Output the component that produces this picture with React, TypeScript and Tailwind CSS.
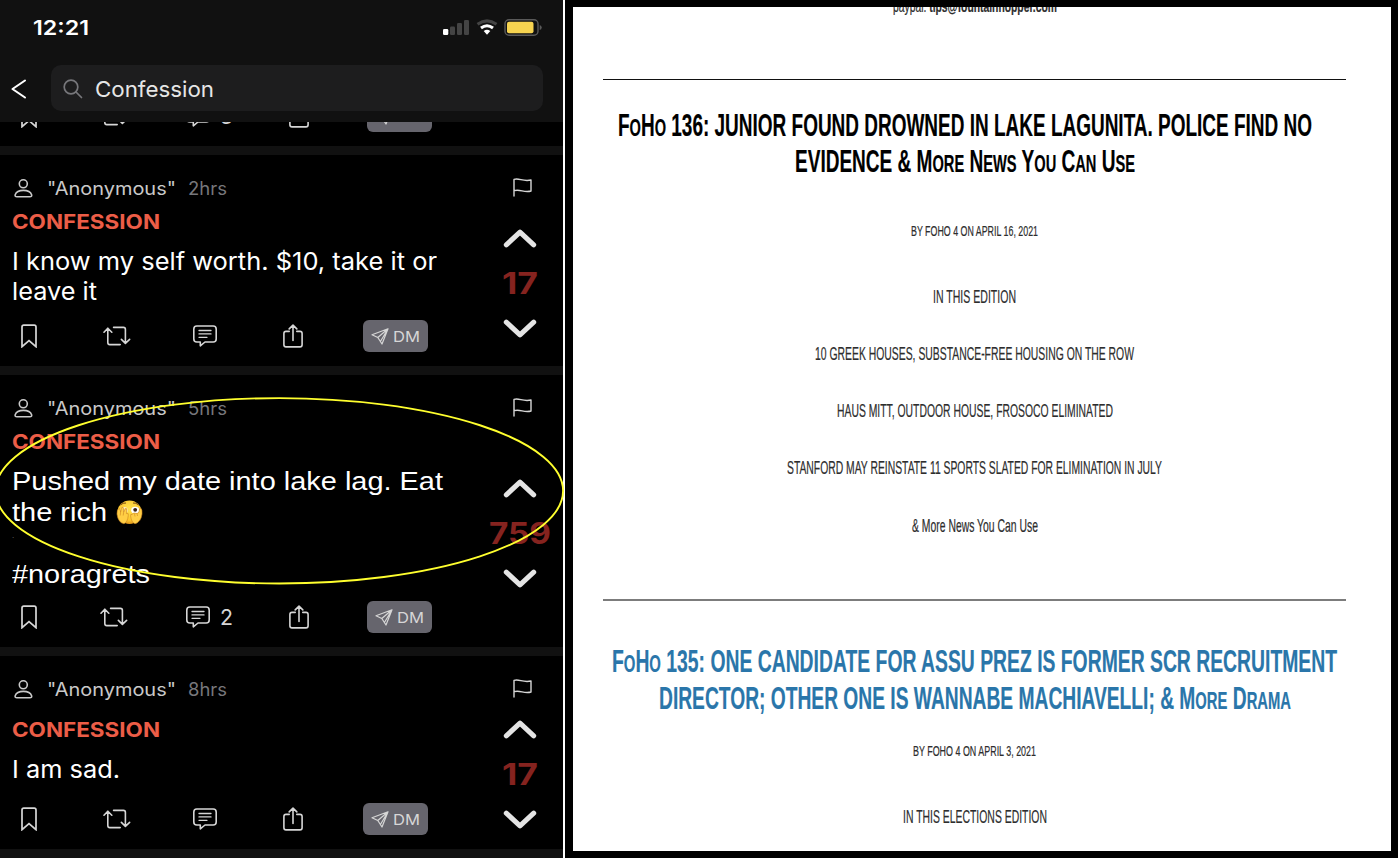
import { useLayoutEffect, useRef, useState, type ReactNode } from "react";

/** One line of text, stretched or condensed to fill the given width. */
function Fit({ w, className = "", children }: { w: number; className?: string; children: ReactNode }) {
  const ref = useRef<HTMLSpanElement>(null);
  const [scale, setScale] = useState(1);
  useLayoutEffect(() => {
    if (ref.current) setScale(w / ref.current.getBoundingClientRect().width);
  }, [w]);
  return (
    <span className={`block shrink-0 ${className}`} style={{ width: w }}>
      <span className="block w-max origin-left whitespace-nowrap" style={{ transform: `scaleX(${scale})` }}>
        <span ref={ref} className="inline-block">{children}</span>
      </span>
    </span>
  );
}

const line = { fill: "none", stroke: "currentColor", strokeLinecap: "round", strokeLinejoin: "round" } as const;

const Bookmark = () => (
  <svg className="h-6 w-4 shrink-0" viewBox="0 0 16 24" {...line} strokeWidth="1.7">
    <path d="M1 22.7V3Q1 1.2 2.8 1.2H13.2Q15 1.2 15 3V22.7L8 16.6Z" strokeLinejoin="miter" />
  </svg>
);
const Repost = () => (
  <svg className="h-5 w-7 shrink-0" viewBox="0 0 28 20" {...line} strokeWidth="1.6">
    <path d="M1 6.2L4.8 2.2L8.8 6.2M4.8 2.8V16.5Q4.8 18.6 6.8 18.6H17.2M10.6 1.4H20.4Q22.4 1.4 22.4 3.4V17M18.4 13.4L22.4 17.4L26.6 13.4" />
  </svg>
);
const Comment = () => (
  <svg className="h-[22px] w-6 shrink-0" viewBox="0 0 24 22" {...line} strokeWidth="1.6">
    <path d="M3.8 1H20.2Q23.2 1 23.2 4V14Q23.2 17 20.2 17H12L7.3 20.8V17H3.8Q.8 17 .8 14V4Q.8 1 3.8 1Z" />
    <path d="M6 5.5H18M6 8.9H18M6 12.3H14" strokeWidth="1.3" />
  </svg>
);
const Share = () => (
  <svg className="h-6 w-5 shrink-0" viewBox="0 0 20 24" {...line} strokeWidth="1.6">
    <path d="M6.2 7.4H3Q.9 7.4 .9 9.5V20.8Q.9 22.9 3 22.9H17Q19.1 22.9 19.1 20.8V9.5Q19.1 7.4 17 7.4H13.8M10 16.5V1.2M6.2 4.9L10 1.1L13.8 4.9" />
  </svg>
);
const Plane = () => (
  <svg className="h-[17px] w-[18px] shrink-0" viewBox="0 0 18 17" {...line} strokeWidth="1.2">
    <path d="M17 .8L1 6.8L6.8 9.5L11 16ZM17 .8L6.8 9.5M17 .8L10 12.5" />
  </svg>
);
const Person = () => (
  <svg className="h-[19px] w-[19px] shrink-0" viewBox="0 0 19 19" {...line} strokeWidth="1.6">
    <circle cx="9.3" cy="4.8" r="4" />
    <path d="M3 17.7H15.8Q18.2 17.7 17.6 15.7C16.6 12.8 13.1 11.4 9.4 11.4C5.7 11.4 2.2 12.8 1.2 15.7Q.6 17.7 3 17.7Z" />
  </svg>
);
const Flag = () => (
  <svg className="h-[19px] w-[19px]" viewBox="0 0 19 19" {...line} strokeWidth="1.4">
    <path d="M1 18V1.4C6-.4 10 4 18 2V13C11 15.2 7 10.5 1 12.7" />
  </svg>
);
const Chevron = ({ down = false }: { down?: boolean }) => (
  <svg className="h-[19px] w-[34px]" viewBox="0 0 34 19" {...line} strokeWidth="5">
    <path d={down ? "M3.3 3.2L17 15.8L30.7 3.2" : "M3.3 15.8L17 3.2L30.7 15.8"} />
  </svg>
);

const PeekingFace = () => (
  <svg className="h-[25px] w-[27px] shrink-0" viewBox="0 0 27 25">
    <defs>
      <radialGradient id="face" cx=".5" cy=".35" r=".7">
        <stop offset="0" stopColor="#ffe34f" />
        <stop offset=".7" stopColor="#fcc52c" />
        <stop offset="1" stopColor="#d98513" />
      </radialGradient>
    </defs>
    <ellipse cx="13.5" cy="12.2" rx="12" ry="11.8" fill="url(#face)" />
    <path d="M4.5 5Q7 2.6 10 3M17 3Q20 2.5 22.5 5" fill="none" stroke="#7b4a13" strokeWidth="1" />
    <ellipse cx="8.2" cy="10.2" rx="3.6" ry="3.2" fill="#fff0c0" />
    <ellipse cx="19.2" cy="10.2" rx="4" ry="3.4" fill="#fff" />
    <circle cx="19.2" cy="9.8" r="1.9" fill="#3b2417" />
    <g fill="#ffce45" stroke="#c98320" strokeWidth=".6">
      <path d="M1 14Q1 9 3 8.5Q4.5 9 4.6 12L5.8 7.5Q7.5 6.8 7.6 8.5L7.7 12L9.3 8.5Q11 8 10.8 10L10.4 13.5Q13 12.8 12.3 15.5Q11.6 22 8 23.8Q2 22.5 1 14Z" />
      <path d="M26 14Q26.3 9 24.8 8.3Q23.2 8.5 22.8 12.5L21 13.5L18.5 13Q17 12.8 16.2 14.5Q14.3 13.5 14.6 16Q15.4 22.5 19 23.8Q25 22 26 14Z" />
    </g>
    <path d="M4.6 12L4.2 15.5M7.7 12L7.2 15.5M21 13.5L21.5 16M18.5 13.5L19 16.5" stroke="#c98320" strokeWidth=".6" />
  </svg>
);

function Actions({ count }: { count?: string }) {
  const wide = count !== undefined;
  return (
    <div className="flex h-8 items-center pl-[21px] text-[#d6d6d6]">
      <Bookmark />
      <div className={wide ? "ml-[63px]" : "ml-[66px]"}><Repost /></div>
      <div className={wide ? "ml-[58px]" : "ml-[62px]"}><Comment /></div>
      {wide && <Fit w={13} className="ml-2.5 text-[22px] leading-8">{count}</Fit>}
      <div className={wide ? "ml-14" : "ml-[66px]"}><Share /></div>
      <div className={`${wide ? "ml-[58px]" : "ml-[60px]"} flex h-8 w-[65px] items-center rounded-md bg-[#66656d] pl-2`}>
        <Plane />
        <Fit w={27} className="ml-1 pt-px text-[15px] leading-8">DM</Fit>
      </div>
    </div>
  );
}

interface PostProps {
  age: string;
  votes: string;
  votesWidth: number;
  height: string;
  titleGap: string;
  bodyGap: string;
  bodyHeight: string;
  voteGap: string;
  count?: string;
  children: ReactNode;
}

function Post({ age, votes, votesWidth, height, titleGap, bodyGap, bodyHeight, voteGap, count, children }: PostProps) {
  return (
    <article className={`flex shrink-0 border-b-9 border-[#111] bg-black ${height}`}>
      <div className="flex w-[478px] flex-col pt-5">
        <div className="flex h-[26px] items-center pl-3.5 text-[18px] leading-[26px] text-[#c9c9c9]">
          <Person />
          <Fit w={129} className="ml-3.5 pt-px">"Anonymous"</Fit>
          <Fit w={39} className="ml-3 pt-px text-[#77777b]">{age}</Fit>
        </div>
        <div className={`pl-3 text-[20px] leading-6 font-bold text-[#ec5d47] ${titleGap}`}>
          <Fit w={148}>CONFESSION</Fit>
        </div>
        <div className={`pl-3 text-white ${bodyGap} ${bodyHeight}`}>{children}</div>
        <Actions count={count} />
      </div>
      <div className="flex w-[84px] flex-col items-center pt-[23px] text-[#e4e4e4]">
        <div className="pl-1 text-[#d6d6d6]"><Flag /></div>
        <div className={voteGap}><Chevron /></div>
        <Fit w={votesWidth} className="my-2 text-[30px] leading-[55px] font-bold text-[#85231f]">{votes}</Fit>
        <Chevron down />
      </div>
    </article>
  );
}

function StatusBar() {
  return (
    <div className="flex h-[54px] items-center pl-[33px] text-[20px] font-semibold text-white">
      <Fit w={56} className="pt-px">12:21</Fit>
      <svg className="ml-[353px] h-5 w-[102px]" viewBox="0 0 102 20">
        <rect x="1" y="12" width="5.3" height="6" rx="1.3" fill="#fff" />
        <g fill="#444">
          <rect x="8" y="9.5" width="5" height="8.5" rx="1.2" />
          <rect x="15" y="6" width="5" height="12" rx="1.2" />
          <rect x="22" y="3" width="5" height="15" rx="1.2" />
        </g>
        <g fill="none">
          <path d="M35.5 7.2Q45 .5 54.5 7.2" stroke="#444" strokeWidth="3" />
          <path d="M39 11Q45 6.5 51 11" stroke="#fff" strokeWidth="3" />
        </g>
        <path d="M41.7 13.9Q45 11.8 48.3 13.9L45 17.7Z" fill="#fff" />
        <rect x="63" y="2.7" width="33" height="15.5" rx="4" fill="none" stroke="#5a5a5a" strokeWidth="1.4" />
        <rect x="65" y="4.7" width="26.5" height="11.5" rx="2" fill="#f7d450" />
        <path d="M97.7 8Q99.7 8.5 99.7 10.5Q99.7 12.5 97.7 13Z" fill="#5a5a5a" />
      </svg>
    </div>
  );
}

function Phone() {
  return (
    <section className="relative flex h-full w-[563px] shrink-0 flex-col bg-black font-['Inter',sans-serif]">
      <header className="h-[122px] shrink-0 bg-[#111]">
        <StatusBar />
        <div className="mt-[11px] flex items-center pl-[11px]">
          <svg className="mt-0.5 h-5 w-4" viewBox="0 0 16 20" {...line} stroke="#fff" strokeWidth="2.1">
            <path d="M14 1.5L1.5 10L14 18.5" />
          </svg>
          <div className="ml-6 flex h-[46px] w-[492px] items-center rounded-[10px] bg-[#1d1d1e] pl-3">
            <svg className="mt-px h-5 w-5" viewBox="0 0 20 20" {...line} stroke="#77777b" strokeWidth="1.7">
              <circle cx="8" cy="8" r="6.8" />
              <path d="M13 13L18.5 18.5" />
            </svg>
            <Fit w={119} className="ml-3 pt-0.5 text-[22px] text-[#e6e6e6]">Confession</Fit>
          </div>
        </div>
      </header>
      <div className="h-[33px] shrink-0 overflow-hidden border-b-9 border-[#111]">
        <div className="-mt-[22px]"><Actions count="3" /></div>
      </div>
      <Post age="2hrs" votes="17" votesWidth={36} height="h-[220px]" titleGap="mt-[9px]" bodyGap="mt-3" bodyHeight="h-[74px]" voteGap="mt-8">
        <Fit w={425} className="text-[24.5px] leading-[30px]">I know my self worth. $10, take it or</Fit>
        <Fit w={85} className="text-[24.5px] leading-[30px]">leave it</Fit>
      </Post>
      <Post age="5hrs" votes="759" votesWidth={62} height="h-[281px]" titleGap="mt-[9px]" bodyGap="mt-3" bodyHeight="h-[135px]" voteGap="mt-[62px]" count="2">
        <div className="font-['Liberation_Sans',sans-serif] text-[26px] leading-[31px]">
          <Fit w={431}>Pushed my date into lake lag. Eat</Fit>
          <div className="flex items-center">
            <Fit w={95}>the rich</Fit>
            <div className="ml-[9px]"><PeekingFace /></div>
          </div>
          <div className="h-[31px] text-[8px] leading-4 text-[#777]">.</div>
          <Fit w={138}>#noragrets</Fit>
        </div>
      </Post>
      <Post age="8hrs" votes="17" votesWidth={36} height="h-[202px]" titleGap="mt-4" bodyGap="mt-3" bodyHeight="h-[49px]" voteGap="mt-[22px]">
        <Fit w={108} className="text-[24.5px] leading-[30px]">I am sad.</Fit>
      </Post>
      <svg className="absolute top-[396px] left-0 z-10 h-[190px] w-[566px]" viewBox="0 0 566 190">
        <ellipse cx="279.3" cy="94.8" rx="283.8" ry="92.7" fill="none" stroke="#ffff2e" strokeWidth="1.9" />
      </svg>
    </section>
  );
}

/** Letters set as small capitals. */
const Sc = ({ children }: { children: ReactNode }) => <span className="text-[0.77em] leading-none uppercase">{children}</span>;

const edition: [string, number][] = [
  ["IN THIS EDITION", 83],
  ["10 GREEK HOUSES, SUBSTANCE-FREE HOUSING ON THE ROW", 319],
  ["HAUS MITT, OUTDOOR HOUSE, FROSOCO ELIMINATED", 276],
  ["STANFORD MAY REINSTATE 11 SPORTS SLATED FOR ELIMINATION IN JULY", 375],
  ["& More News You Can Use", 126],
];

function Newsletter() {
  return (
    <section className="flex h-full flex-1 overflow-hidden border-t-7 border-r-7 border-b-7 border-l-8 border-black bg-white">
      <div className="ml-[30px] flex w-[743px] flex-col items-center pt-px font-['Liberation_Sans',sans-serif] text-[#2d2d2d] [-webkit-text-stroke:0.2px]">
        <Fit w={164} className="-mt-[13px] text-[16px] leading-6">paypal: <b>tips@fountainhopper.com</b></Fit>
        <hr className="mt-[59.5px] w-full shrink-0 border-t border-[#111]" />
        <h2 className="mt-[28px] mr-[19px] flex flex-col items-center text-[31px] leading-[36.5px] font-bold text-black">
          <Fit w={694}>F<Sc>o</Sc>H<Sc>o</Sc> 136: JUNIOR FOUND DROWNED IN LAKE LAGUNITA. POLICE FIND NO</Fit>
          <Fit w={340}>EVIDENCE &amp; M<Sc>ore</Sc> N<Sc>ews</Sc> Y<Sc>ou</Sc> C<Sc>an</Sc> U<Sc>se</Sc></Fit>
        </h2>
        <Fit w={127} className="mt-[40px] text-[14.5px] leading-5">BY FOHO 4 ON APRIL 16, 2021</Fit>
        <div className="mt-[28px] flex flex-col items-center text-[17.7px] leading-[57.3px]">
          {edition.map(([text, width]) => <Fit key={text} w={width}>{text}</Fit>)}
        </div>
        <hr className="mt-[44px] w-full shrink-0 border-t-2 border-[#7c7c7c]" />
        <h2 className="mt-[42px] flex flex-col items-center text-[32px] leading-[37px] font-bold text-[#2a76aa]">
          <Fit w={725}>F<Sc>o</Sc>H<Sc>o</Sc> 135: ONE CANDIDATE FOR ASSU PREZ IS FORMER SCR RECRUITMENT</Fit>
          <Fit w={632}>DIRECTOR; OTHER ONE IS WANNABE MACHIAVELLI; &amp; M<Sc>ore</Sc> D<Sc>rama</Sc></Fit>
        </h2>
        <Fit w={123} className="mt-6 text-[14.5px] leading-5">BY FOHO 4 ON APRIL 3, 2021</Fit>
        <Fit w={144} className="mt-[34px] text-[17.7px] leading-[44px]">IN THIS ELECTIONS EDITION</Fit>
      </div>
    </section>
  );
}

export default function App() {
  return (
    <main className="flex h-[858px] w-[1398px] overflow-hidden bg-black">
      <Phone />
      <div className="w-0.5 shrink-0 bg-white" />
      <Newsletter />
    </main>
  );
}
